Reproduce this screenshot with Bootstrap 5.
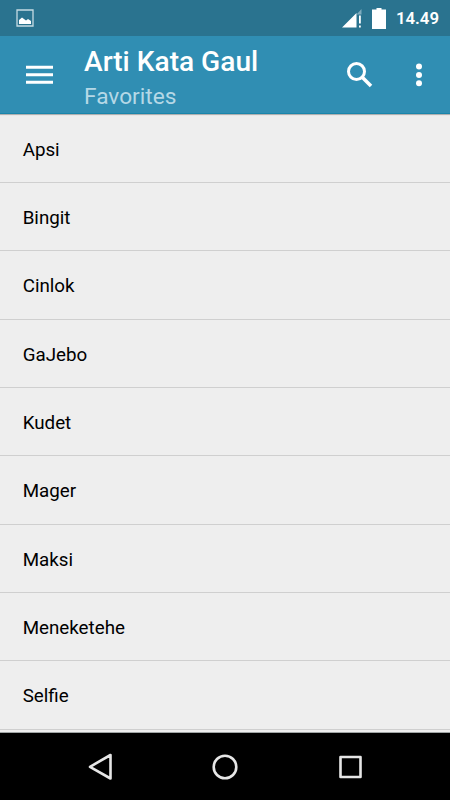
<!DOCTYPE html>
<html lang="id">
<head>
<meta charset="utf-8">
<meta name="viewport" content="width=device-width, initial-scale=1">
<title>Arti Kata Gaul</title>
<link href="https://cdn.jsdelivr.net/npm/bootstrap@5.3.0/dist/css/bootstrap.min.css" rel="stylesheet">
<style>
body { font-family: Roboto, sans-serif; background: #eee; }
svg { display: block; flex: none; }
.screen { width: 450px; height: 800px; }
.status-bar { height: 36px; background: #2a738f; padding: 0 11px 0 16px; }
.clock { font-size: 16.8px; line-height: 37px; font-weight: 600; }
.app-bar { height: 78px; background: #308eb3; padding: 0 19px 0 24px; border-bottom: 1px solid #1985ab; }
.menu-btn { margin-right: 30px; }
.app-title { font-size: 28.1px; line-height: 34px; font-weight: 500; margin-top: 1px; }
.app-sub { font-size: 22.7px; line-height: 35px; color: #b5d8e6; }
.search-btn { margin-right: 34px; }
.battery { margin: 0 7px; }
.words { box-shadow: inset 0 2px 1px -1px #a9a9a9; padding-top: .5px; }
.word { height: 68.37px; padding: 0 22.7px; font-size: 18.75px; line-height: 71px; color: #000; background: transparent; border: 0; border-bottom: 1px solid #cfcfcf; }
.nav-keys { height: 68px; background: #000; border-top: 1px solid #a0a5a5; }
</style>
<script src="https://cdn.jsdelivr.net/npm/bootstrap@5.3.0/dist/js/bootstrap.bundle.min.js"></script>
</head>
<body>
<div class="screen d-flex flex-column overflow-hidden">
  <div class="status-bar d-flex align-items-center text-white flex-shrink-0">
    <svg width="18" height="18" viewBox="0 0 18 18"><path d="M1 1h16v16H1z" fill="none" stroke="#c5dbe3" stroke-width="1.3"/><path d="M3 15v-4l3-2.5 4 3 2-1.5 3 2V15z" fill="#fff"/></svg>
    <svg class="ms-auto" width="20" height="20" viewBox="0 0 20 20"><path d="M14.5 6.5 19.5 1v5.5z" fill="#7fabbd"/><path d="M0 19.5 14.5 5V19.5zM17 7.500h1.800v8h-1.800zM17 17.500h1.800v2h-1.800z" fill="#fff"/></svg>
    <svg class="battery" width="20" height="22" viewBox="0 0 20 22"><path d="M7.500 1h5v1.500h4.500V22H3V2.500h4.500z" fill="#fff"/></svg>
    <span class="clock">14.49</span>
  </div>
  <header class="app-bar d-flex align-items-center text-white flex-shrink-0">
    <svg class="menu-btn" width="30" height="24" viewBox="0 0 30 24"><path d="M2 4.200h27M2 11.700h27M2 19.200h27" stroke="#fff" stroke-width="3"/></svg>
    <div class="align-self-start pt-2 flex-grow-1">
      <div class="app-title">Arti Kata Gaul</div>
      <div class="app-sub">Favorites</div>
    </div>
    <svg class="search-btn" width="27" height="27" viewBox="0 0 27 27"><circle cx="10.500" cy="10.500" r="8" fill="none" stroke="#fff" stroke-width="3"/><path d="m16 16 9 9" stroke="#fff" stroke-width="3.500"/></svg>
    <svg width="24" height="24" viewBox="0 0 24 24"><g fill="#fff"><circle cx="12" cy="3.600" r="3"/><circle cx="12" cy="12" r="3"/><circle cx="12" cy="20.300" r="3"/></g></svg>
  </header>
  <main class="words list-group list-group-flush flex-grow-1 overflow-hidden">
    <div class="word flex-shrink-0">Apsi</div>
    <div class="word flex-shrink-0">Bingit</div>
    <div class="word flex-shrink-0">Cinlok</div>
    <div class="word flex-shrink-0">GaJebo</div>
    <div class="word flex-shrink-0">Kudet</div>
    <div class="word flex-shrink-0">Mager</div>
    <div class="word flex-shrink-0">Maksi</div>
    <div class="word flex-shrink-0">Meneketehe</div>
    <div class="word flex-shrink-0">Selfie</div>
  </main>
  <nav class="nav-keys flex-shrink-0 d-flex justify-content-center align-items-center">
    <svg width="280" height="30" viewBox="0 0 280 30" fill="none" stroke="#e6e6e6" stroke-width="2.600" stroke-linejoin="round"><path d="M25.500 3v23.500L5 14.800z"/><circle cx="140" cy="15" r="11.300"/><path d="M255.500 5h20v20h-20z"/></svg>
  </nav>
</div>
</body>
</html>
